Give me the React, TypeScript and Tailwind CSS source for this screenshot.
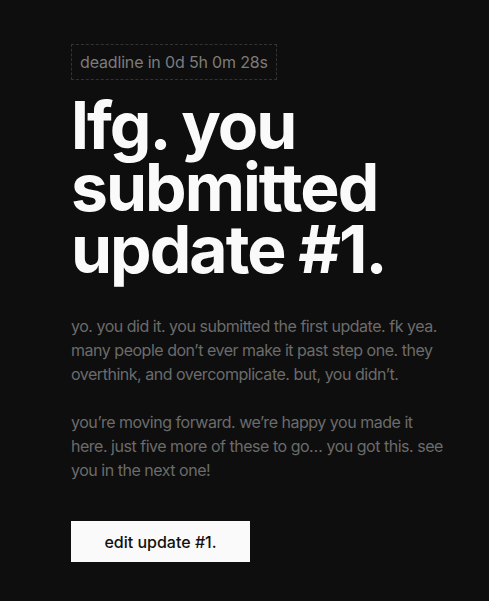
import React from "react";

const App = () => {
  return (
    <main className="min-h-screen bg-[#0e0e0e] font-['Inter',sans-serif] pl-[71px] pr-[40px] pt-[44px] pb-10">
      <div className="inline-block border border-dashed border-[#333333] px-2 py-[5px] text-base tracking-[-0.01em] text-[#7c7c7c]">
        deadline in 0d 5h 0m 28s
      </div>

      <h1 className="mt-[14px] text-[66px] leading-[62px] font-bold tracking-[-0.03em] text-[#fafafa]">
        lfg. you
        <br />
        submitted
        <br />
        update #1.
      </h1>

      <div className="mt-[34px] text-base leading-6 tracking-[-0.03em] text-[#6b6b6b] space-y-6">
        <p>
          yo. you did it. you submitted the first update. fk yea. many people
          don’t ever make it past step one. they overthink, and overcomplicate.
          but, you didn’t.
        </p>
        <p>
          you’re moving forward. we’re happy you made it here. just five more of
          these to go… you got this. see you in the next one!
        </p>
      </div>

      <button className="mt-[39px] block w-[179px] h-[41px] bg-[#fafafa] text-base font-medium text-[#111111]">
        edit update #1.
      </button>
    </main>
  );
};

export default App;
